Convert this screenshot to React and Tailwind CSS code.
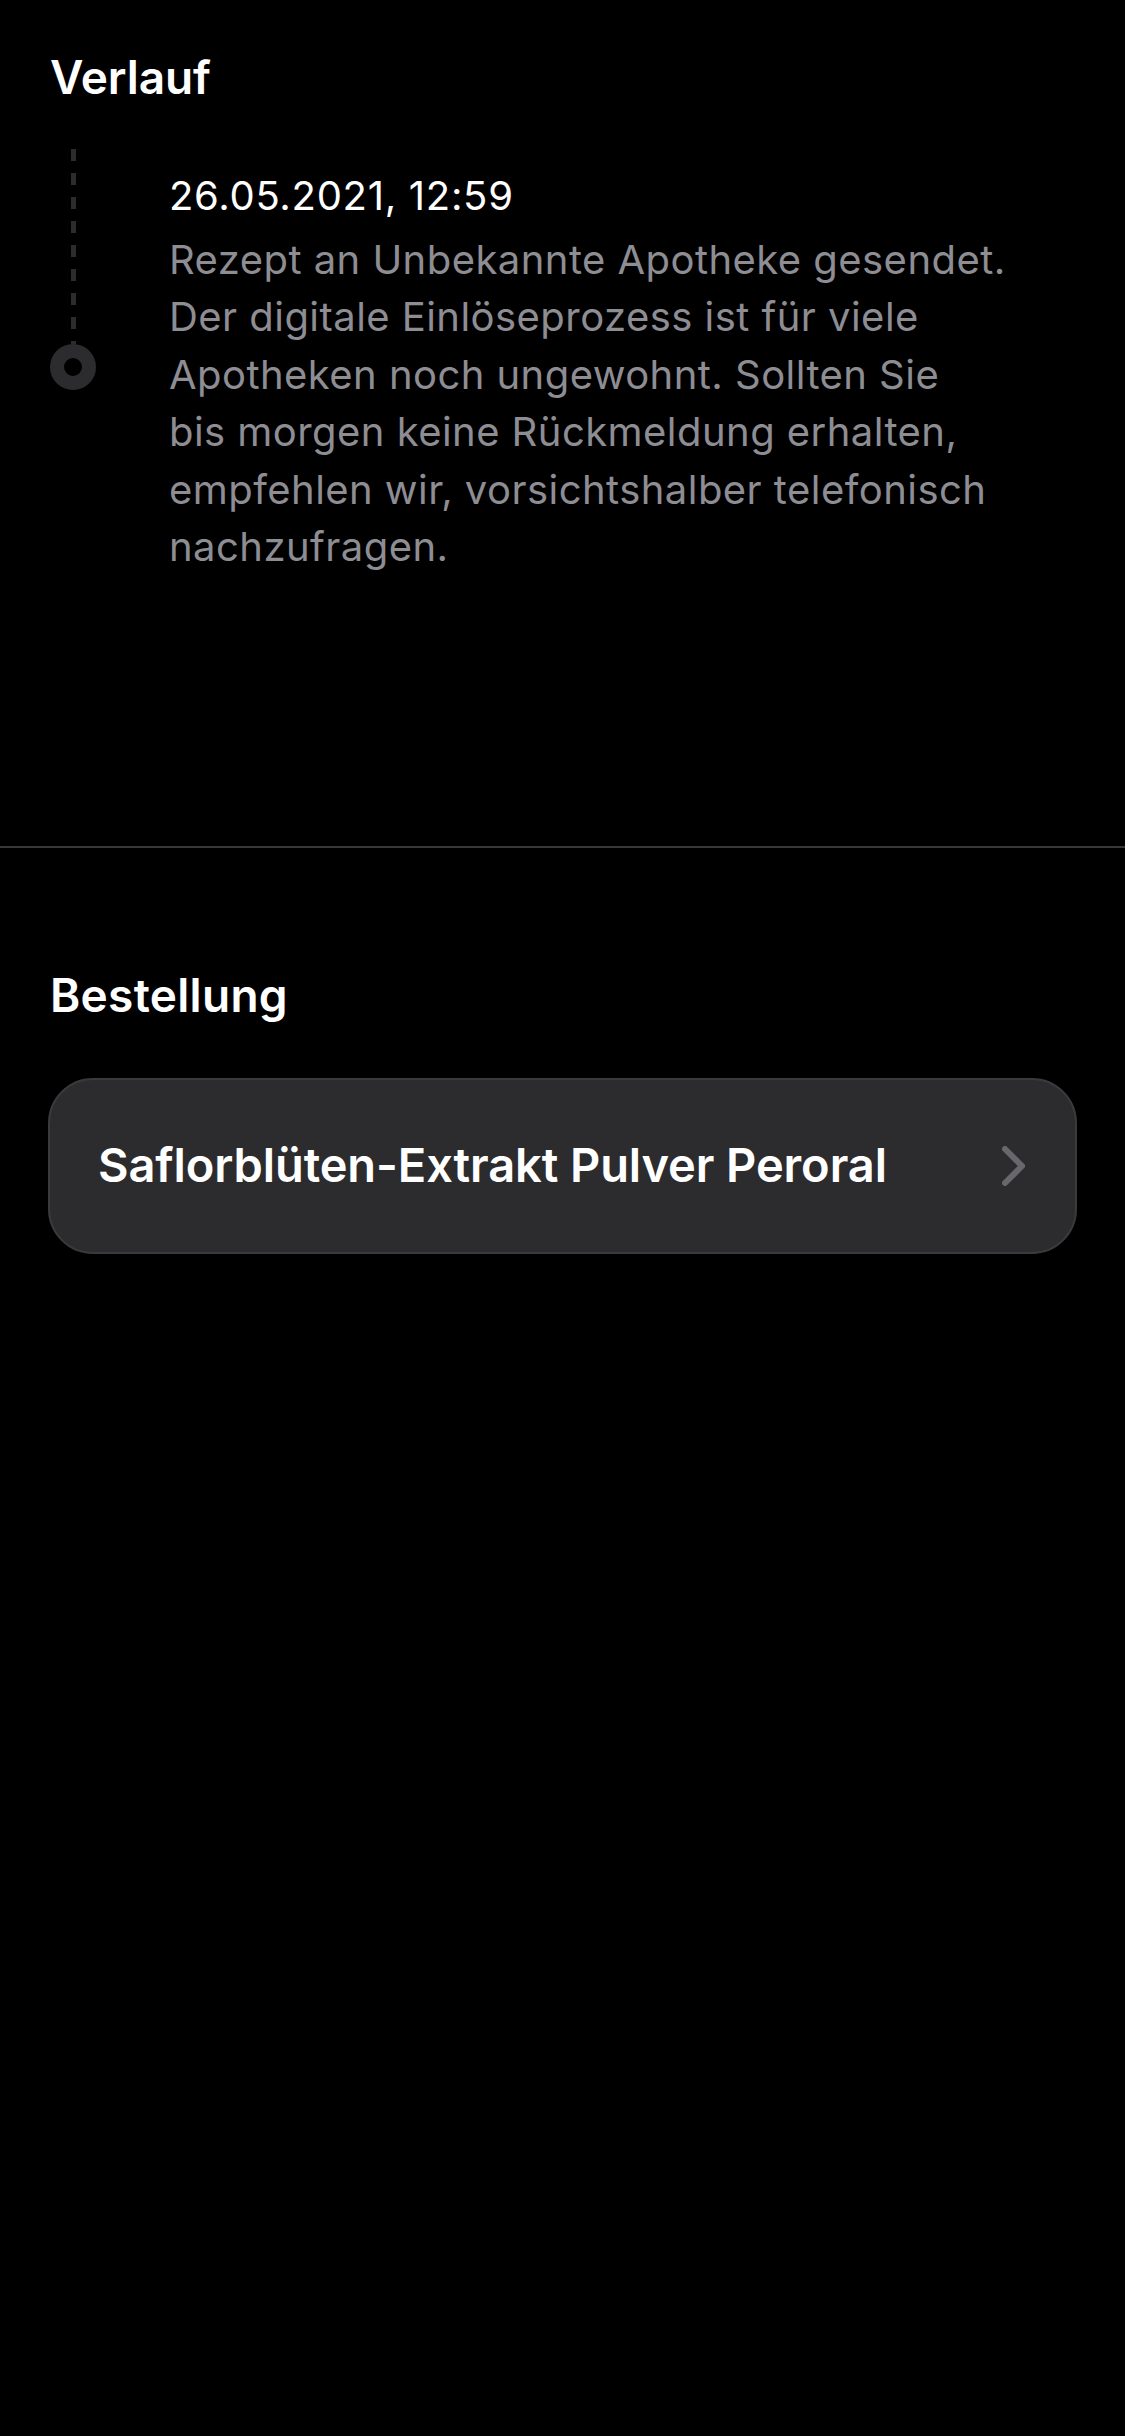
import React from "react";

const lines = [
  "Rezept an Unbekannte Apotheke gesendet.",
  "Der digitale Einlöseprozess ist für viele",
  "Apotheken noch ungewohnt. Sollten Sie",
  "bis morgen keine Rückmeldung erhalten,",
  "empfehlen wir, vorsichtshalber telefonisch",
  "nachzufragen.",
];

const Chevron = () => (
  <svg width="23" height="40" viewBox="0 0 23 40" fill="none">
    <path
      d="M3 3 L20 20 L3 37"
      stroke="#68686c"
      strokeWidth="6"
      strokeLinecap="round"
      strokeLinejoin="round"
    />
  </svg>
);

export default function App() {
  return (
    <div className="min-h-[2436px] bg-black font-['Inter',sans-serif] text-white">
      {/* Verlauf */}
      <section className="px-[50px] pt-[49px] pb-[270px]">
        <h2 className="text-[46px] font-semibold leading-[56px] tracking-[-0.1px]">Verlauf</h2>

        <div className="mt-[44px] flex">
          <div className="flex w-[46px] shrink-0 flex-col items-center">
            <div className="h-[195px] w-[5px] bg-[repeating-linear-gradient(to_bottom,#2c2c2e_0px,#2c2c2e_12px,transparent_12px,transparent_24px)]" />
            <div className="h-[46px] w-[46px] rounded-full border-[14px] border-[#2c2c2e] bg-black" />
          </div>

          <div className="ml-[73px] mt-[18px]">
            <p className="mb-[6px] whitespace-nowrap text-[40px] leading-[57.5px] tracking-[0.7px] text-white">
              26.05.2021, 12:59
            </p>
            <div className="text-[40px] leading-[57.5px] tracking-[0.45px] text-[#8d8d93]">
              {lines.map((l) => (
                <div key={l} className="whitespace-nowrap">
                  {l}
                </div>
              ))}
            </div>
          </div>
        </div>
      </section>

      <div className="h-[2px] w-full bg-[#38383a]" />

      {/* Bestellung */}
      <section className="px-[48px] pt-[119px]">
        <h2 className="pl-[2px] text-[46px] font-semibold leading-[56px] tracking-[0.3px]">Bestellung</h2>

        <button className="mt-[55px] flex h-[176px] w-full items-center justify-between rounded-[45px] border-2 border-[#3a3a3c] bg-[#2c2c2e] pl-[48px] pr-[50px] text-left">
          <span className="text-[47px] font-semibold tracking-[-0.1px] text-white">
            Saflorblüten-Extrakt Pulver Peroral
          </span>
          <Chevron />
        </button>
      </section>
    </div>
  );
}
